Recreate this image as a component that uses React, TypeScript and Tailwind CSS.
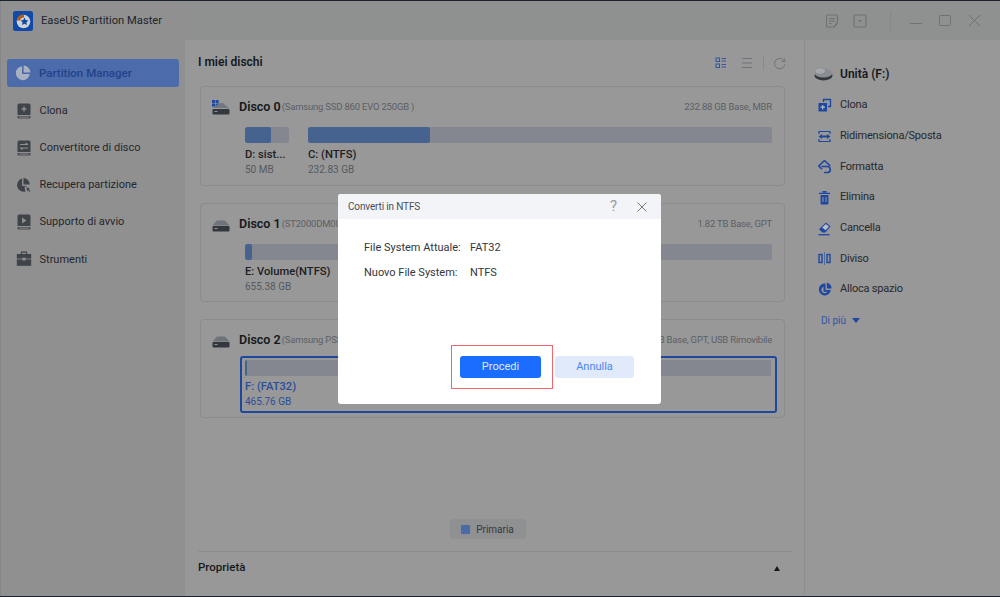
const font = { fontFamily: 'Roboto, "Noto Sans", "Liberation Sans", sans-serif' };

function Logo() {
  return (
    <svg width="20" height="20" viewBox="0 0 20 20" className="shrink-0">
      <rect width="20" height="20" rx="2.5" fill="#0f4aa8" />
      <circle cx="10.5" cy="10.5" r="6.8" fill="#cfd2d6" />
      <path d="M3.6 9.5A7 7 0 0 1 11 3.5V6.5A4 4 0 0 0 7 9.5Z" fill="#b55a14" />
      <path d="M11.5 6.5l1.2 2.6 2.8.3-2.1 1.9.6 2.8-2.5-1.4-2.5 1.4.6-2.8-2.1-1.9 2.8-.3Z" fill="#0f4aa8" />
    </svg>
  );
}

function SideBook({ kind }: { kind: string }) {
  return (
    <svg width="16" height="16" viewBox="0 0 16 16" className="shrink-0">
      <path d="M3 0.5h10a1.5 1.5 0 0 1 1.5 1.5v10H1.5V2A1.5 1.5 0 0 1 3 .5Z" fill="#3f434a" />
      <rect x="1.5" y="13" width="13" height="2.4" rx="0.8" fill="#3f434a" />
      <rect x="3" y="13.6" width="10" height="1" fill="#8f8f8f" />
      {kind === "plus" && <path d="M8 3.5v5M5.5 6h5" stroke="#8f8f8f" strokeWidth="1.4" />}
      {kind === "swap" && <path d="M4 4.5h8M9.5 3l2 1.5M12 8H4M6.5 9.5L4.5 8" stroke="#8f8f8f" strokeWidth="1.2" fill="none" />}
      {kind === "play" && <path d="M6 3.5l4.5 3-4.5 3Z" fill="#8f8f8f" />}
    </svg>
  );
}

function SideIcon({ name }: { name: string }) {
  if (name === "pie")
    return (
      <svg width="16" height="16" viewBox="0 0 16 16" className="shrink-0">
        <path d="M7 1.2A7 7 0 1 0 14.8 9H7Z" fill="#a9b1c0" />
        <path d="M8.6 .6A7 7 0 0 1 15.4 7.4H8.6Z" fill="#a9b1c0" />
      </svg>
    );
  if (name === "recover")
    return (
      <svg width="16" height="16" viewBox="0 0 17 16" className="shrink-0">
        <path d="M6.5 1.2A7 7 0 1 0 10 15L9 10 12 9H6.5Z" fill="#3f434a" />
        <path d="M8 .6A7 7 0 0 1 14.6 7.4H8Z" fill="#3f434a" />
        <path d="M11 10.5l4 1.5-1.5.7 1.8 1.8-.8.8-1.8-1.8-.7 1.5Z" fill="#3f434a" />
      </svg>
    );
  if (name === "case")
    return (
      <svg width="16" height="16" viewBox="0 0 16 16" className="shrink-0">
        <path d="M5.5 3V1.2h5V3" stroke="#3f434a" strokeWidth="1.2" fill="none" />
        <rect x="0.8" y="3" width="14.4" height="4.6" fill="#3f434a" />
        <rect x="0.8" y="8.4" width="14.4" height="6.4" fill="#3f434a" />
        <rect x="6.5" y="6.6" width="3" height="3" fill="#8f8f8f" />
      </svg>
    );
  return <SideBook kind={name} />;
}

const sideItems = [
  ["plus", "Clona"],
  ["swap", "Convertitore di disco"],
  ["recover", "Recupera partizione"],
  ["play", "Supporto di avvio"],
  ["case", "Strumenti"],
];

function Sidebar() {
  return (
    <div className="w-[185px] shrink-0 bg-[#909090] flex flex-col border-l border-[#84868a]">
      <div className="h-[39px] flex items-center pl-[12px] gap-[8px]">
        <Logo />
        <span className="text-[11.2px] text-[#22252b] mt-[1px]">EaseUS Partition Master</span>
      </div>
      <div className="mt-[19px] mx-[6px] h-[28px] rounded-[3px] bg-[#4b6bab] flex items-center pl-[8px] gap-[8px]">
        <SideIcon name="pie" />
        <span className="text-[11.5px] text-[#23428a] font-medium mt-[1px]">Partition Manager</span>
      </div>
      <div className="mt-[5px] flex flex-col">
        {sideItems.map(([k, t]) => (
          <div key={t} className="h-[37.2px] flex items-center pl-[14.5px] gap-[8px]">
            <SideIcon name={k} />
            <span className="text-[11px] text-[#24272d] mt-[1px]">{t}</span>
          </div>
        ))}
      </div>
    </div>
  );
}

function HeaderIcons() {
  const c = "#6f7175";
  return (
    <div className="h-[39px] bg-[#8f9090] flex items-center justify-end pr-[19px]">
      <svg width="14" height="14" viewBox="0 0 14 14" fill="none" stroke={c} strokeWidth="1.1" className="mr-[14px]">
        <path d="M9 13H2.5a1 1 0 0 1-1-1V2a1 1 0 0 1 1-1h9a1 1 0 0 1 1 1v6.5Z" />
        <path d="M4 4.5h6M4 7h6M4 9.5h2.5M9 13l3.5-4.5" />
      </svg>
      <svg width="14" height="14" viewBox="0 0 14 14" fill="none" stroke={c} strokeWidth="1.1" className="mr-[23px]">
        <rect x="1" y="1" width="12" height="12" rx="1.5" />
        <path d="M5 6h4L7 8.5Z" fill={c} stroke="none" />
      </svg>
      <div className="w-px h-[20px] bg-[#868788] mr-[19px]" />
      <div className="w-[12px] h-px bg-[#6f7175] mt-[6px] mr-[17px]" />
      <div className="w-[12px] h-[11px] border border-[#6f7175] rounded-[1.5px] mr-[17px]" />
      <svg width="13" height="13" viewBox="0 0 13 13" stroke={c} strokeWidth="1">
        <path d="M1 1l11 11M12 1L1 12" />
      </svg>
    </div>
  );
}

function DiskIcon({ win }: { win?: boolean }) {
  return (
    <svg width="18" height="15" viewBox="0 0 18 15" className="shrink-0">
      {win ? (
        <>
          <rect x="0" y="0" width="3" height="3" fill="#1c4aa5" />
          <rect x="3.6" y="0" width="3" height="3" fill="#1c4aa5" />
          <rect x="0" y="3.6" width="3" height="3" fill="#1c4aa5" />
          <rect x="3.6" y="3.6" width="3" height="3" fill="#1c4aa5" />
          <path d="M7 3h4l6 5H1Z" fill="#70747b" opacity="0.9" />
        </>
      ) : (
        <path d="M5 3.5h8l4.5 5H.5Z" fill="#6f737a" />
      )}
      <rect x="0.5" y="9" width="17" height="5.5" rx="1" fill="#33373e" />
      <rect x="2.5" y="11" width="3" height="1" fill="#90939a" />
    </svg>
  );
}

function Bar({ w, fill, grow }: { w?: number; fill: number; grow?: boolean }) {
  return (
    <div className={`h-[16px] bg-[#84878f] rounded-[2px] overflow-hidden ${grow ? "flex-1" : ""}`} style={w ? { width: w } : undefined}>
      <div className="h-full bg-[#46628f] rounded-[2px]" style={{ width: fill }} />
    </div>
  );
}

function CardHead({ name, sub, right, win }: { name: string; sub: string; right: string; win?: boolean }) {
  return (
    <div className="flex items-center h-[15px] pl-[11px] pr-[12px] mt-[1px]">
      <div className="w-[27px]"><DiskIcon win={win} /></div>
      <span className="text-[12.5px] font-semibold text-[#16181d]">{name}</span>
      <span className="text-[9.5px] tracking-[-0.2px] text-[#5c5f65] ml-[1px] whitespace-nowrap">{sub}</span>
      <span className="ml-auto text-[9.5px] tracking-[-0.2px] text-[#5c5f65] whitespace-nowrap">{right}</span>
    </div>
  );
}

function Label({ title, size, blue }: { title: string; size: string; blue?: boolean }) {
  return (
    <>
      <div className={`mt-[4px] text-[11.2px] leading-[16px] font-medium whitespace-nowrap ${blue ? "text-[#2a4e9a]" : "text-[#1c1e23]"}`}>{title}</div>
      <div className={`text-[10px] leading-[14px] ${blue ? "text-[#2a4e9a]" : "text-[#55585e]"}`}>{size}</div>
    </>
  );
}

function Main() {
  const cardCls = "mx-[15px] mr-[19px] border border-[#898b90] rounded-[4px] pt-[12px]";
  return (
    <div className="flex-1 flex flex-col bg-[#989898] border-r border-[#8d8d8d] relative">
      <div className="h-[46px] flex items-center pl-[13px] pr-[18px] pb-[3px]">
        <span className="text-[12px] font-semibold text-[#16181d]">I miei dischi</span>
        <div className="ml-auto flex items-center mt-[3px]">
          <svg width="12" height="12" viewBox="0 0 12 12" fill="none" stroke="#2d55a8" strokeWidth="1" className="mr-[14px]">
            <rect x="1" y="1" width="3.5" height="3.5" /><rect x="1" y="7" width="3.5" height="3.5" />
            <path d="M6.5 1.5H11M6.5 4H11M6.5 7.5H11M6.5 10H11" />
          </svg>
          <svg width="12" height="12" viewBox="0 0 12 12" stroke="#70737a" strokeWidth="1" className="mr-[10px]">
            <path d="M1 1.5h10M1 6h10M1 10.5h10" />
          </svg>
          <div className="w-px h-[14px] bg-[#888a8e] mr-[9px]" />
          <svg width="13" height="13" viewBox="0 0 13 13" fill="none" stroke="#70737a" strokeWidth="1">
            <path d="M11.3 4.2A5.2 5.2 0 1 0 11.8 7.5M11.8 1.5v3H8.8" />
          </svg>
        </div>
      </div>

      <div className={`${cardCls} h-[100px]`}>
        <CardHead name="Disco 0" sub="(Samsung SSD 860 EVO 250GB )" right="232.88 GB Base, MBR" win />
        <div className="flex mt-[12px] pl-[44px] pr-[12px] gap-[19px]">
          <div className="w-[44px]">
            <Bar w={44} fill={26} />
            <Label title="D: sist..." size="50 MB" />
          </div>
          <div className="flex-1">
            <Bar grow fill={122} />
            <Label title="C: (NTFS)" size="232.83 GB" />
          </div>
        </div>
      </div>

      <div className={`${cardCls} h-[99px] mt-[17px]`}>
        <CardHead name="Disco 1" sub="(ST2000DM008-2FR102)" right="1.82 TB Base, GPT" />
        <div className="mt-[12px] pl-[44px] pr-[12px]">
          <Bar fill={7} />
          <Label title="E: Volume(NTFS)" size="655.38 GB" />
        </div>
      </div>

      <div className={`${cardCls} h-[99px] mt-[17px]`}>
        <CardHead name="Disco 2" sub="(Samsung  PSSD T7 SCSI Disk Device)" right="465.76 GB Base, GPT, USB Rimovibile" />
        <div className="mt-[8px] ml-[39px] mr-[7px] h-[57px] border-2 border-[#1e47a0] rounded-[3px] pt-[2px] pl-[3px] pr-[4px]">
          <Bar fill={2} />
          <div className="-mt-[1px]">
            <Label title="F: (FAT32)" size="465.76 GB" blue />
          </div>
        </div>
      </div>

      <div className="flex-1 flex items-end justify-center pb-[12px] pr-[14px]">
        <div className="w-[76px] h-[20px] bg-[#8f9092] rounded-[3px] flex items-center justify-center gap-[6px]">
          <div className="w-[9px] h-[9px] bg-[#4a6aa8] rounded-[1px]" />
          <span className="text-[10px] text-[#35383e]">Primaria</span>
        </div>
      </div>
      <div className="mx-[13px] h-[45px] border-t border-[#8c8d8e] flex items-center justify-between pr-[12px] pb-[12px] mr-[12px]">
        <span className="text-[11.5px] font-medium text-[#16181d]">Proprietà</span>
        <div className="w-0 h-0 border-l-[3.5px] border-r-[3.5px] border-b-[5px] border-l-transparent border-r-transparent border-b-[#16181d]" />
      </div>
    </div>
  );
}

function RIcon({ name }: { name: string }) {
  const c = "#1e47a0";
  const p: Record<string, React.ReactNode> = {
    clone: (
      <>
        <path d="M6.5 4V1.5h7v7H11" fill="none" stroke={c} strokeWidth="1.3" />
        <rect x="1.5" y="5" width="8.5" height="8.5" fill={c} />
        <path d="M5.7 7v4.5M3.5 9.2h4.5" stroke="#b8bcc4" strokeWidth="1.2" />
      </>
    ),
    resize: (
      <>
        <path d="M2 5V2.5h11V5M2 10v2.5h11V10" fill="none" stroke={c} strokeWidth="1.2" />
        <path d="M4 7.5h7" stroke={c} strokeWidth="2" />
        <path d="M5 5v5L1.5 7.5ZM10 5v5l3.5-2.5Z" fill={c} />
      </>
    ),
    format: (
      <>
        <path d="M7.5 1.5 1.8 7 5 10.2M7.5 1.5 13.2 7" fill="none" stroke={c} strokeWidth="1.6" />
        <path d="M4.5 7.5h5.5a3 3 0 0 1 .5 6H7" fill="none" stroke={c} strokeWidth="1.6" />
      </>
    ),
    trash: (
      <>
        <path d="M2 2.8h11v1.3H2ZM5.5 1h4v1.4h-4Z" fill={c} />
        <path d="M3.6 5h7.8v8.5a1 1 0 0 1-1 1H4.6a1 1 0 0 1-1-1Z" fill={c} />
        <path d="M6 7v5M9 7v5" stroke="#989898" strokeWidth="1" />
      </>
    ),
    erase: (
      <>
        <path d="M9 1.5l4.5 4-5.2 6H5.5L2 8.3Z" fill={c} />
        <path d="M8.8 3 12 5.6 8.5 9.3 5.2 6.5Z" fill="#b8bcc4" />
        <path d="M1.5 13.7h11" stroke={c} strokeWidth="1.3" />
      </>
    ),
    split: (
      <>
        <rect x="2" y="3.5" width="3" height="8" fill="none" stroke={c} strokeWidth="1.4" />
        <rect x="10" y="3.5" width="3" height="8" fill="none" stroke={c} strokeWidth="1.4" />
        <path d="M7.5 1v13" stroke={c} strokeWidth="0.8" opacity="0.7" />
      </>
    ),
    alloc: (
      <>
        <path d="M8.5 1.5A6 6 0 1 0 13.8 8H8.5Z" fill={c} />
        <path d="M6.5 4.8A3.3 3.3 0 1 0 10.4 9.8H6.5Z" fill="#989898" />
        <path d="M9.8 .8A5 5 0 0 1 14.4 6.5H9.8Z" fill={c} />
      </>
    ),
  };
  return (
    <svg width="15" height="15" viewBox="0 0 15 15" className="shrink-0">
      {p[name]}
    </svg>
  );
}

const rightItems = [
  ["clone", "Clona"],
  ["resize", "Ridimensiona/Sposta"],
  ["format", "Formatta"],
  ["trash", "Elimina"],
  ["erase", "Cancella"],
  ["split", "Diviso"],
  ["alloc", "Alloca spazio"],
];

function RightPanel() {
  return (
    <div className="w-[195px] shrink-0 bg-[#989898] pt-[19px] pl-[9px]">
      <div className="h-[30.8px] flex items-center gap-[7px]">
        <svg width="19" height="14" viewBox="0 0 19 14" className="shrink-0">
          <ellipse cx="9.5" cy="8.5" rx="9" ry="5" fill="#33373e" />
          <ellipse cx="9.5" cy="6" rx="9" ry="4.5" fill="#8a8d92" />
          <ellipse cx="6" cy="4" rx="5.5" ry="3.2" fill="#a5a7ab" stroke="#7a7d82" strokeWidth="0.5" />
        </svg>
        <span className="text-[12px] font-semibold text-[#16181d]">Unità (F:)</span>
      </div>
      <div className="flex flex-col mt-[0.4px]">
        {rightItems.map(([k, t]) => (
          <div key={k} className="h-[30.7px] flex items-center gap-[8px] pl-[3px]">
            <RIcon name={k} />
            <span className="text-[11px] tracking-[-0.2px] text-[#25282e]">{t}</span>
          </div>
        ))}
      </div>
      <div className="h-[30px] flex items-center pl-[7px] gap-[6px]">
        <span className="text-[10px] text-[#2f55a8]">Di più</span>
        <div className="w-0 h-0 border-l-[4px] border-r-[4px] border-t-[5px] border-l-transparent border-r-transparent border-t-[#1e47a0]" />
      </div>
    </div>
  );
}

function Modal() {
  return (
    <div className="absolute left-[338px] top-[193px] w-[323px] h-[210px] bg-white rounded-[3px] flex flex-col">
      <div className="h-[25px] bg-[#f3f4f7] rounded-t-[3px] flex items-center pl-[10px] pr-[14px]">
        <span className="text-[10px] tracking-[-0.15px] text-[#4a4d52]">Converti in NTFS</span>
        <span className="ml-auto mr-[20px] text-[15px] text-[#9a9ca0] leading-none">?</span>
        <svg width="10" height="10" viewBox="0 0 10 10" stroke="#777a7f" strokeWidth="1">
          <path d="M.5.5l9 9M9.5.5l-9 9" />
        </svg>
      </div>
      <div className="pl-[26px] pt-[17px] text-[11px] text-[#33363b]">
        <div className="flex h-[25px] items-center">
          <span className="w-[106px]">File System Attuale:</span>
          <span>FAT32</span>
        </div>
        <div className="flex h-[25px] items-center">
          <span className="w-[106px]">Nuovo File System:</span>
          <span>NTFS</span>
        </div>
      </div>
      <div className="mt-auto mb-[26px] flex justify-end pr-[27px] gap-[14px]">
        <div className="w-[81px] h-[22px] pt-[1px] rounded-[3px] bg-[#1a6dff] flex items-center justify-center text-[11px] text-[#dfe9ff]">Procedi</div>
        <div className="w-[79px] h-[22px] pt-[1px] rounded-[3px] bg-[#e0eafb] flex items-center justify-center text-[11px] text-[#4a87f0]">Annulla</div>
      </div>
      <div className="absolute left-[113px] top-[151px] w-[102px] h-[44px] border border-[#f2656a]" />
    </div>
  );
}

export default function App() {
  return (
    <div style={font} className="relative w-[1000px] h-[597px] overflow-hidden bg-[#989898] flex flex-col border-t border-b border-[#1c2130]">
      <div className="flex flex-1 min-h-0">
        <Sidebar />
        <div className="flex-1 flex flex-col min-w-0">
          <HeaderIcons />
          <div className="flex flex-1 min-h-0">
            <Main />
            <RightPanel />
          </div>
        </div>
      </div>
      <Modal />
    </div>
  );
}
